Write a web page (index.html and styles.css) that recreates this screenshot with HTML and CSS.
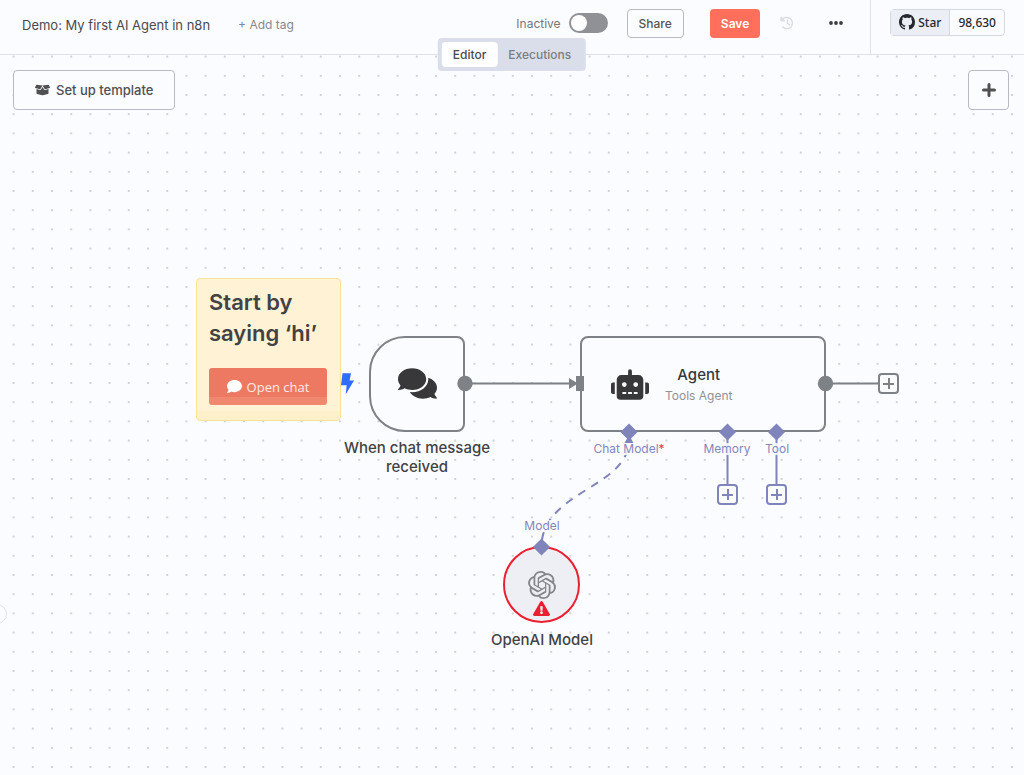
FILE: index.html
```html
<!DOCTYPE html>
<html lang="en">
<head>
<meta charset="utf-8">
<meta name="viewport" content="width=device-width, initial-scale=1">
<title>Demo: My first AI Agent in n8n</title>
<link rel="stylesheet" href="styles.css">
</head>
<body>
<header class="header">
  <div class="header-main">
    <h1 class="title">Demo: My first AI Agent in n8n</h1>
    <button class="add-tag" type="button">+ Add tag</button>
    <div class="actions">
      <label class="activator">Inactive <input class="switch" type="checkbox" role="switch"></label>
      <button class="btn share" type="button">Share</button>
      <button class="btn save" type="button">Save</button>
      <button class="icon-btn history" type="button" aria-label="Workflow history" disabled>
        <svg width="14" height="14" viewBox="0 0 14 14" fill="none" stroke="currentColor" stroke-width="1.5" stroke-linecap="round" stroke-linejoin="round"><path d="M2 4.2A5.6 5.6 0 1 1 2.6 10.8M7.4 4v3.3l2 1.4"/><path fill="currentColor" d="M1 1.600V4.800H4.200Z"/></svg>
      </button>
      <button class="icon-btn more" type="button" aria-label="More">
        <svg width="14" height="4" viewBox="0 0 14 4" fill="currentColor"><circle cx="2" cy="2" r="1.9"/><circle cx="7" cy="2" r="1.9"/><circle cx="12" cy="2" r="1.9"/></svg>
      </button>
    </div>
  </div>
  <div class="header-github">
    <div class="github">
      <a class="github-star" href="#star"><svg width="16" height="16" viewBox="0 0 16 16" fill="currentColor" aria-hidden="true"><path d="M8 0C3.58 0 0 3.58 0 8c0 3.54 2.29 6.53 5.47 7.59.4.07.55-.17.55-.38 0-.19-.01-.82-.01-1.49-2.01.37-2.53-.49-2.69-.94-.09-.23-.48-.94-.82-1.13-.28-.15-.68-.52-.01-.53.63-.01 1.08.58 1.23.82.72 1.21 1.87.87 2.33.66.07-.52.28-.87.51-1.07-1.78-.2-3.64-.89-3.64-3.95 0-.87.31-1.59.82-2.15-.08-.2-.36-1.02.08-2.12 0 0 .67-.21 2.2.82.64-.18 1.32-.27 2-.27.68 0 1.36.09 2 .27 1.53-1.04 2.2-.82 2.2-.82.44 1.1.16 1.92.08 2.12.51.56.82 1.27.82 2.15 0 3.07-1.87 3.75-3.65 3.95.29.25.54.73.54 1.48 0 1.07-.01 1.93-.01 2.2 0 .21.15.46.55.38A8.013 8.013 0 0016 8c0-4.42-3.58-8-8-8z"/></svg>Star</a>
      <a class="github-count" href="#stargazers">98,630</a>
    </div>
  </div>
  <nav class="tabs" aria-label="Workflow view">
    <button class="tab active" type="button">Editor</button>
    <button class="tab" type="button">Executions</button>
  </nav>
</header>

<main class="canvas">
  <svg class="grid" aria-hidden="true">
    <defs>
      <pattern id="dots" width="20" height="20" patternUnits="userSpaceOnUse" patternTransform="translate(4 -8) scale(.96)">
        <circle cx="10" cy="10" r=".7"/>
      </pattern>
    </defs>
    <rect width="100%" height="100%" fill="url(#dots)"/>
  </svg>

  <div class="canvas-bar">
    <button class="template-btn" type="button"><svg width="15" height="12" viewBox="0 0 640 512" fill="currentColor" aria-hidden="true"><path d="M425.7 256c-16.9 0-32.8-9-41.4-23.4L320 126l-64.2 106.6c-8.7 14.5-24.6 23.5-41.5 23.5-4.5 0-9-.6-13.3-1.9L64 215v178c0 14.7 10 27.5 24.2 31l216.2 54.1c10.2 2.5 20.9 2.5 31 0L551.8 424c14.2-3.6 24.2-16.4 24.2-31V215l-137 39.1c-4.3 1.3-8.8 1.9-13.3 1.9zm212.6-112.2L586.8 41c-3.1-6.2-9.8-9.8-16.7-8.9L320 64l91.7 152.1c3.8 6.3 11.4 9.3 18.5 7.3l197.9-56.5c9.9-2.9 14.7-13.9 10.2-23.1zM53.2 41L1.7 143.8c-4.6 9.2.3 20.2 10.1 23l197.9 56.5c7.1 2 14.7-1 18.5-7.3L320 64 69.8 32.1c-6.9-.8-13.6 2.7-16.6 8.9z"/></svg>Set up template</button>
    <button class="plus-btn" type="button" aria-label="Add node">
      <svg width="14" height="14" viewBox="0 0 14 14" fill="none" stroke="currentColor" stroke-width="3" stroke-linecap="round"><path d="M7 1.5v11M1.5 7h11"/></svg>
    </button>
  </div>

  <span class="sidebar-toggle"></span>

  <section class="sticky">
    <h2 class="sticky-title">Start by saying ‘hi’</h2>
    <button class="open-chat" type="button"><svg width="15" height="15" viewBox="0 0 512 512" fill="currentColor" aria-hidden="true"><path d="M256 32C114.6 32 0 125.1 0 240c0 49.6 21.4 95 57 130.7C44.5 421.1 2.7 466 2.2 466.5c-2.2 2.3-2.8 5.7-1.5 8.7S4.8 480 8 480c66.3 0 116-31.8 140.6-51.4 32.7 12.3 69 19.4 107.4 19.4 141.4 0 256-93.1 256-208S397.4 32 256 32z"/></svg>Open chat</button>
  </section>

  <div class="node trigger">
    <svg class="chat-icon" width="39" height="35" viewBox="0 0 576 512" fill="currentColor" aria-hidden="true"><path d="M416 192c0-88.4-93.1-160-208-160S0 103.6 0 192c0 34.3 14.1 65.9 38 92-13.4 30.2-35.5 54.2-35.8 54.5-2.2 2.3-2.8 5.7-1.5 8.7S4.8 352 8 352c36.6 0 66.9-12.3 88.7-25 32.2 15.7 70.3 25 111.3 25 114.9 0 208-71.6 208-160zm122 220c23.9-26 38-57.7 38-92 0-66.9-53.5-124.2-129.3-148.1.9 6.6 1.3 13.3 1.3 20.1 0 105.9-107.7 192-240 192-10.8 0-21.3-.8-31.7-1.9C207.8 439.6 281.8 480 368 480c41 0 79.1-9.2 111.3-25 21.8 12.7 52.1 25 88.7 25 3.2 0 6.1-1.9 7.3-4.8 1.3-2.9.7-6.3-1.5-8.7-.3-.3-22.4-24.2-35.8-54.5z"/></svg>
  </div>
  <div class="caption trigger-caption">When chat message received</div>

  <div class="node agent">
    <svg width="38" height="31" viewBox="0 0 640 512" fill="currentColor" aria-hidden="true"><path d="M32,224H64V416H32A32,32,0,0,1,0,384V256A32,32,0,0,1,32,224Zm512-48V448a64,64,0,0,1-64,64H160a64,64,0,0,1-64-64V176a80,80,0,0,1,80-80H288V32a32,32,0,0,1,64,0V96H464A80,80,0,0,1,544,176ZM264,256a40,40,0,1,0-40,40A40,40,0,0,0,264,256Zm-8,128H192v32h64Zm96,0H288v32h64ZM456,256a40,40,0,1,0-40,40A40,40,0,0,0,456,256Zm-8,128H384v32h64ZM640,256V384a32,32,0,0,1-32,32H576V224h32A32,32,0,0,1,640,256Z"/></svg>
    <div class="agent-text">
      <div class="agent-name">Agent</div>
      <div class="agent-sub">Tools Agent</div>
    </div>
  </div>

  <div class="node model">
    <svg class="openai" width="28" height="28" viewBox="0 0 24 24" fill="currentColor" aria-hidden="true"><path d="M22.2819 9.8211a5.9847 5.9847 0 0 0-.5157-4.9108 6.0462 6.0462 0 0 0-6.5098-2.9A6.0651 6.0651 0 0 0 4.9807 4.1818a5.9847 5.9847 0 0 0-3.9977 2.9 6.0462 6.0462 0 0 0 .7427 7.0966 5.98 5.98 0 0 0 .511 4.9107 6.051 6.051 0 0 0 6.5146 2.9001A5.9847 5.9847 0 0 0 13.2599 24a6.0557 6.0557 0 0 0 5.7718-4.2058 5.9894 5.9894 0 0 0 3.9977-2.9001 6.0557 6.0557 0 0 0-.7475-7.0729zm-9.022 12.6081a4.4755 4.4755 0 0 1-2.8764-1.0408l.1419-.0804 4.7783-2.7582a.7948.7948 0 0 0 .3927-.6813v-6.7369l2.02 1.1686a.071.071 0 0 1 .038.052v5.5826a4.504 4.504 0 0 1-4.4945 4.4944zm-9.6607-4.1254a4.4708 4.4708 0 0 1-.5346-3.0137l.142.0852 4.783 2.7582a.7712.7712 0 0 0 .7806 0l5.8428-3.3685v2.3324a.0804.0804 0 0 1-.0332.0615L9.74 19.9502a4.4992 4.4992 0 0 1-6.1408-1.6464zM2.3408 7.8956a4.485 4.485 0 0 1 2.3655-1.9728V11.6a.7664.7664 0 0 0 .3879.6765l5.8144 3.3543-2.0201 1.1685a.0757.0757 0 0 1-.071 0l-4.8303-2.7865A4.504 4.504 0 0 1 2.3408 7.872zm16.5963 3.8558L13.1038 8.364 15.1192 7.2a.0757.0757 0 0 1 .071 0l4.8303 2.7913a4.4944 4.4944 0 0 1-.6765 8.1042v-5.6772a.79.79 0 0 0-.407-.667zm2.0107-3.0231l-.142-.0852-4.7735-2.7818a.7759.7759 0 0 0-.7854 0L9.409 9.2297V6.8974a.0662.0662 0 0 1 .0284-.0615l4.8303-2.7866a4.4992 4.4992 0 0 1 6.6802 4.66zM8.3065 12.863l-2.02-1.1638a.0804.0804 0 0 1-.038-.0567V6.0742a4.4992 4.4992 0 0 1 7.3757-3.4537l-.142.0805L8.704 5.459a.7948.7948 0 0 0-.3927.6813zm1.0976-2.3654l2.602-1.4998 2.6069 1.4998v2.9994l-2.5974 1.4997-2.6067-1.4997Z"/></svg>
    <svg class="warning" width="17" height="15" viewBox="0 0 576 512" fill="currentColor" role="img" aria-label="Node has issues"><path d="M569.517 440.013C587.975 472.007 564.806 512 527.94 512H48.054c-36.937 0-59.999-40.055-41.577-71.987L246.423 23.985c18.467-32.009 64.72-31.951 83.154 0l239.94 416.028zM288 354c-25.405 0-46 20.595-46 46s20.595 46 46 46 46-20.595 46-46-20.595-46-46-46zm-43.673-165.346l7.418 136c.347 6.364 5.609 11.346 11.982 11.346h48.546c6.373 0 11.635-4.982 11.982-11.346l7.418-136c.375-6.874-5.098-12.654-11.982-12.654h-63.383c-6.884 0-12.356 5.78-11.981 12.654z"/></svg>
  </div>
  <div class="caption model-caption">OpenAI Model</div>

  <svg class="edges" width="1024" height="720" viewBox="0 55 1024 720" aria-hidden="true">
    <path fill="#2f6dff" d="M342.5 373.3H351L349.6 380.6H354L345.8 394.3L346.6 385.2H341Z"/>
    <g fill="none" stroke="#7e8186" stroke-width="2">
      <path d="M465 383.5H572M825 383.5H878"/>
    </g>
    <g fill="#7e8186">
      <circle cx="465" cy="383.5" r="7.7"/>
      <circle cx="825.5" cy="383.5" r="7.7"/>
      <path d="M569 378L578 383.5L569 389ZM576 376H584V391H576Z"/>
    </g>
    <g fill="none" stroke="#7f84bb" stroke-width="2">
      <path d="M727.5 432V485M776.5 432V485"/>
      <path stroke-dasharray="8 7" stroke-dashoffset="8" d="M541.500 547C541.500 491 629 488 629 440"/>
    </g>
    <g fill="#7f84bb">
      <path d="M629 423.400L637.600 432L629 440.600L620.400 432Z"/>
      <path d="M727.500 423.400L736.100 432L727.500 440.600L718.900 432Z"/>
      <path d="M776.500 423.400L785.100 432L776.500 440.600L767.900 432Z"/>
      <path d="M541.500 538.400L550.100 547L541.500 555.600L532.900 547Z"/>
      <path d="M629 435L633.500 443H624.500Z"/>
    </g>
  </svg>

  <div class="port-label chat-label">Chat Model<span class="required">*</span></div>
  <div class="port-label memory-label">Memory</div>
  <div class="port-label tool-label">Tool</div>
  <div class="port-label model-label">Model</div>

  <button class="add-port add-output" type="button" aria-label="Add next node"></button>
  <button class="add-port add-memory" type="button" aria-label="Add memory"></button>
  <button class="add-port add-tool" type="button" aria-label="Add tool"></button>
</main>
</body>
</html>
```
FILE: styles.css
```css
* {
  box-sizing: border-box;
}

body {
  margin: 0;
  min-height: 100vh;
  display: flex;
  flex-direction: column;
  background: #fbfcff;
  color: #555555;
  font-family: Inter, "Liberation Sans", sans-serif;
  font-size: 12px;
}

button {
  font: inherit;
  color: inherit;
  margin: 0;
  padding: 0;
  border: 0;
  background: none;
}

/* Header */
.header {
  position: relative;
  z-index: 2;
  display: flex;
  height: 55px;
  border-bottom: 1px solid #dfe0ee;
  background: #fbfcff;
}

.header-main {
  flex: 1;
  display: flex;
  align-items: center;
  padding: 0 20px 8px 22px;
}

.title {
  margin: 4px 28px 0 0;
  font-size: 13px;
  font-weight: 400;
  line-height: 16px;
  white-space: nowrap;
  color: #4a4a4c;
}

.add-tag {
  padding-top: 2px;
  color: #87888c;
  font-weight: 400;
}

.actions {
  display: flex;
  align-items: center;
  margin-left: auto;
}

.activator {
  display: flex;
  align-items: center;
  gap: 8px;
  margin-right: 19px;
  color: #75767a;
}

.switch {
  appearance: none;
  width: 39px;
  height: 20px;
  margin: 0;
  padding: 2px;
  border-radius: 10px;
  background: #909197;
}

.switch::before {
  content: "";
  display: block;
  width: 16px;
  height: 16px;
  border-radius: 50%;
  background: #ffffff;
}

.switch:checked::before {
  margin-left: auto;
}

.btn {
  height: 29px;
  padding: 0 11px;
  border-radius: 4px;
  font-weight: 500;
}

.share {
  margin-right: 26px;
  border: 1px solid #b7bac4;
}

.save {
  margin-right: 20px;
  background: #ff6f5c;
  color: #ffffff;
  font-weight: 600;
}

.icon-btn {
  display: grid;
  place-items: center;
}

.history {
  margin-right: 35px;
  color: #dcdde3;
}

.more {
  margin-right: 7px;
  color: #3d3e42;
}

.header-github {
  display: flex;
  align-items: center;
  padding: 0 19px 10px;
  border-left: 1px solid #dfe0ee;
}

.github {
  display: flex;
  height: 27px;
  border: 1px solid #d5d9e4;
  border-radius: 4px;
  font-family: "Noto Sans", sans-serif;
  font-size: 12px;
  font-weight: 500;
}

.github a {
  display: flex;
  align-items: center;
  color: #24292f;
  text-decoration: none;
}

.github-star {
  gap: 3px;
  padding: 0 8px;
  border-right: 1px solid #d5d9e4;
  background: #ebeef4;
}

.github-count {
  padding: 0 8px;
}

.tabs {
  position: absolute;
  top: 38px;
  left: 50%;
  display: flex;
  padding: 4px;
  border-radius: 4px;
  background: #dadeea;
  transform: translateX(-50%);
}

.tab {
  height: 25px;
  padding: 0 11px;
  border-radius: 4px;
  color: #7c7d82;
  font-weight: 500;
}

.tab.active {
  background: #ffffff;
  color: #4a4a4c;
}

/* Canvas */
.canvas {
  position: relative;
  flex: 1;
  overflow: hidden;
}

.grid {
  position: absolute;
  inset: 0;
  width: 100%;
  height: 100%;
  fill: #80838c;
}

.canvas-bar {
  position: relative;
  display: flex;
  justify-content: space-between;
  padding: 15px 15px 0 13px;
}

.template-btn,
.plus-btn {
  display: flex;
  align-items: center;
  justify-content: center;
  gap: 6px;
  height: 40px;
  border: 1px solid #b7bac4;
  border-radius: 4px;
  background: #fbfcff;
  color: #505052;
}

.template-btn {
  padding: 0 21px;
  font-size: 13px;
  font-weight: 500;
}

.plus-btn {
  width: 41px;
}

.sidebar-toggle {
  position: absolute;
  top: 549px;
  left: -13px;
  width: 20px;
  height: 20px;
  border: 1px solid #dfe0ee;
  border-radius: 50%;
  background: #fbfcff;
}

.sticky {
  position: absolute;
  top: 223px;
  left: 196px;
  width: 145px;
  height: 143px;
  padding: 8px 12px;
  border: 1px solid #fbe394;
  border-radius: 4px;
  background: linear-gradient(#fff2d5 132px, #fef0cb 132px);
}

.sticky-title {
  margin: 0 0 19px;
  color: #424244;
  font-size: 22px;
  font-weight: 600;
  line-height: 31px;
}

.open-chat {
  display: flex;
  align-items: center;
  justify-content: center;
  gap: 5px;
  width: 118px;
  height: 37px;
  border-radius: 3px;
  background: linear-gradient(#ee7963 29px, #f08870 29px);
  color: #ffe9e4;
  font-family: "Open Sans", sans-serif;
  font-size: 13px;
  font-weight: 500;
}

.open-chat svg {
  color: #ffffff;
}

.node {
  position: absolute;
  display: flex;
  align-items: center;
  justify-content: center;
  border: 2px solid #7e8186;
  background: #fbfcff;
  color: #38383a;
}

.trigger {
  top: 281px;
  left: 369px;
  width: 96px;
  height: 96px;
  padding-bottom: 1px;
  border-radius: 36px 8px 8px 36px;
}

.agent {
  top: 281px;
  left: 580px;
  width: 246px;
  height: 96px;
  gap: 16px;
  border-radius: 8px;
  justify-content: flex-start;
  padding-left: 29px;
}

.agent-text {
  padding-top: 2px;
  text-align: center;
}

.agent-name {
  color: #38383a;
  font-size: 15px;
  font-weight: 500;
  line-height: 22px;
}

.agent-sub {
  color: #919296;
  font-size: 12px;
  line-height: 20px;
}

.model {
  top: 491px;
  left: 503px;
  width: 77px;
  height: 77px;
  border-color: #ea1f30;
  border-radius: 50%;
  background: #eeeff5;
}

.openai {
  color: #85868b;
}

.warning {
  position: absolute;
  bottom: 5px;
  color: #ea1f30;
}

.caption {
  position: absolute;
  color: #424244;
  font-size: 15px;
  font-weight: 500;
  line-height: 19px;
  text-align: center;
}

.trigger-caption {
  top: 383px;
  left: 337px;
  width: 160px;
}

.model-caption {
  top: 575px;
  left: 482px;
  width: 120px;
}

.edges {
  position: absolute;
  top: 0;
  left: 0;
}

.port-label {
  position: absolute;
  color: #8287bd;
  font-size: 12px;
  line-height: 12px;
  white-space: nowrap;
  background: rgb(251 252 255 / 85%);
  transform: translateX(-50%);
}

.chat-label {
  top: 388px;
  left: 629px;
}

.memory-label {
  top: 388px;
  left: 727px;
}

.tool-label {
  top: 388px;
  left: 777px;
}

.model-label {
  top: 465px;
  left: 542px;
}

.required {
  color: #f0303f;
}

.add-port {
  position: absolute;
  width: 21px;
  height: 21px;
  border: 2px solid #7f84bb;
  border-radius: 4px;
  background:
    linear-gradient(#7f84bb, #7f84bb) center / 11px 2px no-repeat,
    linear-gradient(#7f84bb, #7f84bb) center / 2px 11px no-repeat,
    #fbfcff;
}

.add-output {
  top: 318px;
  left: 878px;
  border-color: #7e8186;
  background:
    linear-gradient(#7e8186, #7e8186) center / 11px 2px no-repeat,
    linear-gradient(#7e8186, #7e8186) center / 2px 11px no-repeat,
    #fbfcff;
}

.add-memory {
  top: 429px;
  left: 717px;
}

.add-tool {
  top: 429px;
  left: 766px;
}
```
